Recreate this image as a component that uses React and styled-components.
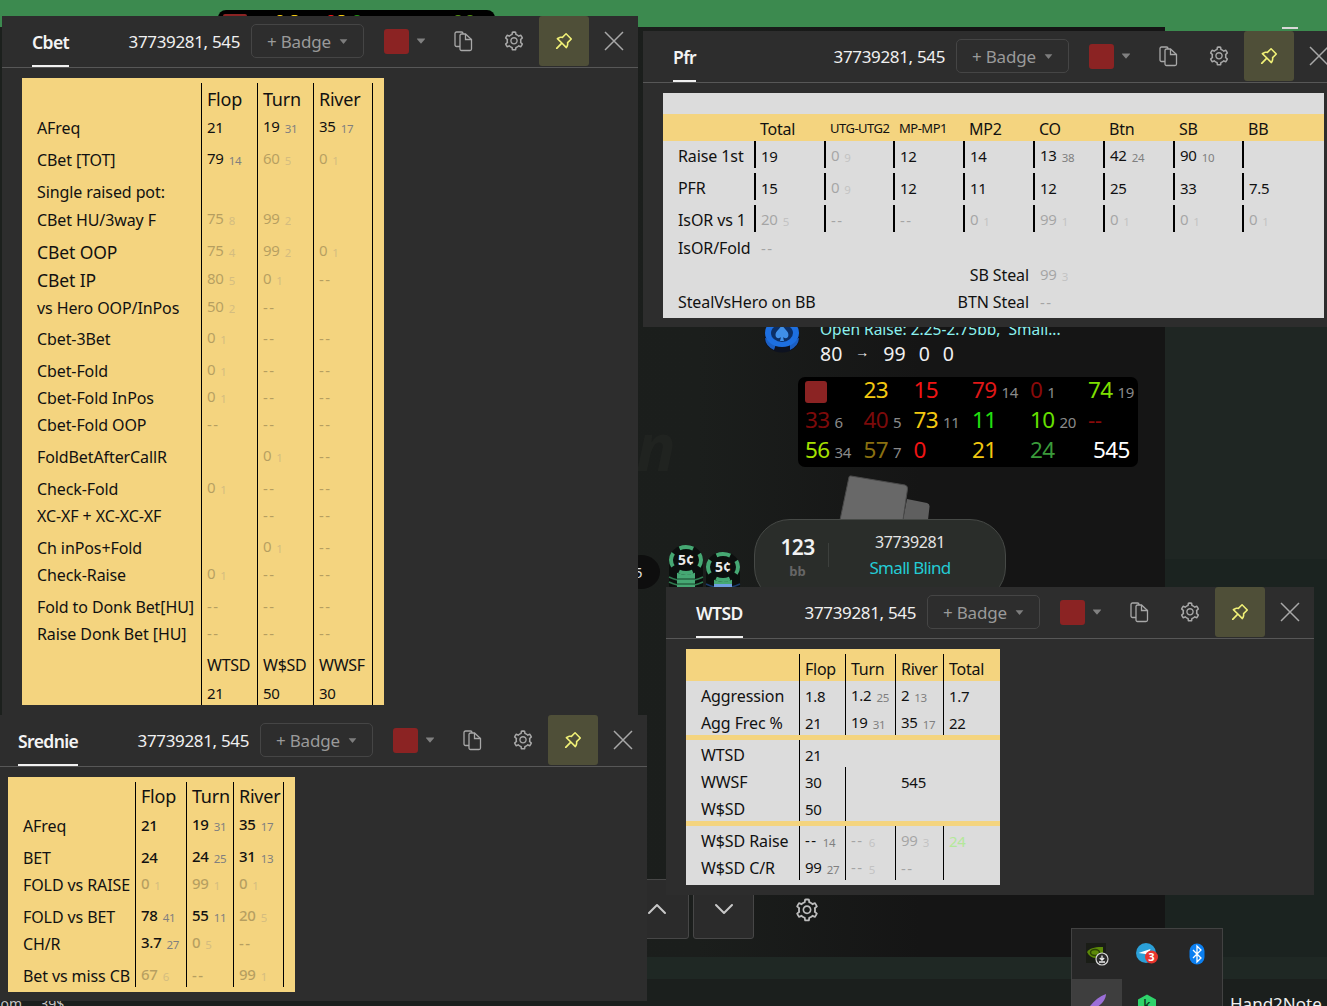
import React from "react";
import styled, { createGlobalStyle } from "styled-components";
import { AiOutlineSetting, AiOutlinePushpin, AiFillCaretDown } from "react-icons/ai";
import { ChevronUp, ChevronDown } from "lucide-react";

const Global = createGlobalStyle`
  html, body { margin: 0; padding: 0; width: 1327px; height: 1006px; overflow: hidden; background: #3c8a4f; }
  * { box-sizing: border-box; }
  body { font-family: "Noto Sans", "Open Sans", sans-serif; }
`;

const Desktop = styled.div`position: relative; width: 1327px; height: 1006px; overflow: hidden; background: #3c8a4f;`;
const AppArea = styled.div`position: absolute; left: 0; top: 27px; width: 1165px; height: 930px;
  background: linear-gradient(90deg, #1c201d 0, #1b1e1c 60%, #151515 79%, #151515 100%);`;
const SideArea = styled.div`position: absolute; left: 1165px; top: 31px; width: 162px; height: 926px;
  background: linear-gradient(180deg, #1f2623 0, #1f2623 57%, #1b2320 57%, #1b2320 100%);`;
const BottomBand = styled.div`position: absolute; left: 0; top: 957px; width: 1327px; height: 22px; background: #1f2824;`;
const BottomBar = styled.div`position: absolute; left: 0; top: 979px; width: 1327px; height: 27px; background: #1b1f1d;`;
const MinimizeMark = styled.div`position: absolute; left: 1282px; top: 27px; width: 16px; height: 2px; background: #d8d8d8;`;
const Watermark = styled.div`position: absolute; left: 636px; top: 400px; font: italic 700 66px "Noto Sans", sans-serif; color: #202320;`;

const PeekPanel = styled.div`position: absolute; left: 218px; top: 10px; width: 277px; height: 20px; background: #000; border-radius: 8px; overflow: hidden;`;
const PeekMark = styled.i`position: absolute; left: ${p => p.$x}px; top: ${p => p.$t}px; width: ${p => p.$w}px; height: 8px; background: ${p => p.$c}; border-radius: 2px;`;

const OpenRaise = styled.div`position: absolute; left: 820px; top: 318px; font-size: 15.500px; line-height: 22px; color: #8cf1ee; white-space: pre;`;
const Flow = styled.div`position: absolute; left: 820px; top: 340px; display: flex; align-items: center; gap: 13px; font-size: 19.500px; line-height: 28px; color: #f0f0f0;`;
const FlowArrow = styled.span`font-size: 14px; margin: 0 1px 0 0; position: relative; top: -2px;`;
const ChipLogo = styled.svg`position: absolute; left: 764px; top: 318px;`;

const StatsPanel = styled.div`position: absolute; left: 798px; top: 377px; width: 340px; height: 90px; background: #000; border-radius: 7px;
  display: grid; grid-template-columns: 58.500px 50px 58.500px 58px 58px 1fr; grid-auto-rows: 30px; padding-left: 7px;`;
const StatCell = styled.div`display: flex; align-items: baseline; color: ${p => p.$c}; font-size: 22.500px; line-height: 26px; letter-spacing: -0.6px; white-space: nowrap; padding-left: ${p => (p.$pad ? 5 : 0)}px;`;
const StatSub = styled.span`font-size: 15px; color: #8a8a8a; margin-left: 5px; letter-spacing: -0.3px;`;
const Swatch = styled.div`width: 22px; height: 22px; margin-top: 4px; background: #8b2323; border-radius: 3px;`;

const CardsArt = styled.svg`position: absolute; left: 835px; top: 470px;`;
const ChipsArt = styled.svg`position: absolute; left: 664px; top: 540px;`;
const DealerDisc = styled.div`position: absolute; left: 622px; top: 555px; width: 38px; height: 34px; border-radius: 50%; background: #0e0e0e; color: #ddd; font-size: 15px; line-height: 34px; text-align: left; padding-left: 12px;`;

const PlayerPill = styled.div`position: absolute; left: 754px; top: 519px; width: 252px; height: 84px; border-radius: 36px; background: #2a2d2a; border: 1px solid #464946;
  display: grid; grid-template-columns: 73px 1fr; align-items: start;`;
const StackBox = styled.div`display: flex; flex-direction: column; align-items: center; padding: 11px 0 0 12px; height: 58px;`;
const StackValue = styled.div`font-size: 21px; font-weight: 600; line-height: 32px; color: #f2f2f2; letter-spacing: -0.6px;`;
const StackUnit = styled.div`font-size: 13px; font-weight: 700; line-height: 16px; color: #666;`;
const PlayerInfo = styled.div`display: flex; flex-direction: column; align-items: center; padding-right: 14px; border-left: 1px solid #3d403d; height: 24px; margin-top: 23px; position: relative;`;
const PlayerId = styled.div`margin-top: -12px; font-size: 16px; line-height: 22px; color: #e4e4e4; letter-spacing: -0.4px;`;
const PlayerRole = styled.div`margin-top: 3px; font-size: 17px; line-height: 24px; color: #24cbd4; letter-spacing: -0.7px; white-space: nowrap;`;

const NavButton = styled.div`position: absolute; left: ${p => p.$x}px; top: 879px; width: ${p => p.$w}px; height: 60px; background: #2b2b2b; border: 1px solid #474747; border-radius: 0 0 3px 3px;
  display: flex; align-items: center; justify-content: center; color: #c8c8c8;`;
const TableGear = styled.div`position: absolute; left: 794px; top: 897px; color: #bcbcbc; display: flex;`;

const Tray = styled.div`position: absolute; left: 1071px; top: 928px; width: 152px; height: 78px; background: #272727; border: 1px solid #424242; border-bottom: 0;
  display: grid; grid-template-columns: repeat(3, 50px); grid-auto-rows: 50px; justify-items: center;`;
const TraySlot = styled.div`width: 50px; height: 50px; display: flex; justify-content: center; align-items: ${p => (p.$low ? "flex-start" : "center")}; padding-top: ${p => (p.$low ? 15 : 0)}px; background: ${p => (p.$active ? "#3e3e3e" : "transparent")};`;
const TrayLabel = styled.div`position: absolute; left: 1230px; top: 992px; font-size: 17px; line-height: 24px; color: #f0f0f0; white-space: nowrap;`;
const FooterText = styled.div`position: absolute; left: -10px; top: 994px; font-size: 14px; line-height: 20px; color: #c4c4c4; white-space: pre;`;

const Win = styled.section`position: absolute; left: ${p => p.$x}px; top: ${p => p.$y}px; width: ${p => p.$w}px; height: ${p => p.$h}px; background: #2d2d2d; overflow: hidden;`;
const Header = styled.header`display: flex; height: 52px; border-bottom: 1px solid #575757; padding-left: 30px;`;
const Tab = styled.div`height: 51px; line-height: 52px; color: #f4f4f4; font-size: 17.500px; font-weight: 600; border-bottom: 2px solid #f0f0f0; letter-spacing: -0.6px;`;
const Tools = styled.div`margin-left: auto; display: flex; align-items: center; height: 50px;`;
const PlayerTag = styled.div`font-size: 17px; color: #f0f0f0; letter-spacing: -0.35px; margin-right: 11px; white-space: nowrap;`;
const BadgeButton = styled.div`width: 113px; height: 34px; border: 1px solid #454545; border-radius: 5px; display: flex; align-items: center; padding-left: 15px; gap: 7px; color: #9a9a9a; font-size: 17px; letter-spacing: -0.2px;`;
const ColorBox = styled.div`width: 25px; height: 25px; background: #8b2323; border-radius: 3px; margin-left: 20px;`;
const ColorCaret = styled.div`display: flex; color: #808080; margin-left: 6px; margin-right: 10px;`;
const ToolButton = styled.div`width: ${p => p.$w || 50}px; height: 50px; display: flex; align-items: center; justify-content: center; color: #a8a8a8;`;
const PinButton = styled(ToolButton)`background: #4f4f38; border-radius: 3px; color: #f1f177;`;

const Body = styled.div`padding: 10px 20px;`;
const Sheet = styled.div`width: ${p => p.$w}px; height: ${p => p.$h}px; background: ${p => p.$bg}; padding-top: ${p => p.$pt || 0}px; overflow: hidden; color: #111;`;
const Row = styled.div`display: grid; grid-template-columns: ${p => p.$cols}; height: ${p => p.$h}px; margin-top: ${p => p.$mt || 0}px; background: ${p => (p.$band ? "#f4d47f" : "transparent")};`;
const Label = styled.div`padding-left: 15px; align-self: end; line-height: 23px; font-size: ${p => p.$size || 16}px; white-space: nowrap; letter-spacing: -0.1px;`;
const YellowLabel = styled(Label)`line-height: 21px;`;
const Cell = styled.div`border-left: ${p => (p.$plain ? "0" : `${p.$line || 1}px solid #000`)}; border-right: ${p => (p.$end ? "1px solid #000" : "0")}; padding-left: ${p => (p.$plain ? (p.$line === 2 ? 7 : 6) : 5)}px;
  margin-top: ${p => p.$top || 0}px; display: flex; align-items: flex-end; line-height: 23px; font-size: ${p => p.$size || 15}px; white-space: nowrap; letter-spacing: -0.25px; font-weight: ${p => (p.$bold ? 500 : 400)};`;
const Val = styled.span`opacity: ${p => (p.$faded ? 0.27 : 1)}; display: inline-flex; align-items: baseline; letter-spacing: ${p => (p.$dash ? "1.5px" : "inherit")};`;
const Sub = styled.span`font-size: 11.500px; color: #7f7f7f; margin-left: 5px; font-weight: 400; letter-spacing: -0.3px; position: relative; top: 1px;`;
const Tint = styled.span`color: #b4e89a;`;
const SpanLabel = styled.div`grid-column: 1 / span 5; display: flex; justify-content: space-between; align-self: end; padding: 0 4px 0 15px; line-height: 23px; font-size: 16px; letter-spacing: -0.1px; white-space: nowrap;`;
const TinyHead = styled.span`font-size: 13px; letter-spacing: -0.5px; position: relative; top: -1px;`;

function V({ v, s, f }) {
  return <Val $faded={f} $dash={v === "--"}>{v}{s && <Sub>{s}</Sub>}</Val>;
}

function Copy() {
  return (
    <svg width="19" height="21" viewBox="0 0 19 21" fill="none" stroke="currentColor" strokeWidth="1.3">
      <path d="M6 15.5H2.5A1.5 1.5 0 0 1 1 14V2.5A1.5 1.5 0 0 1 2.5 1H7.5A1.5 1.5 0 0 1 9 2.5V3" />
      <path d="M6 4.5A1.5 1.5 0 0 1 7.5 3H11.5L17.5 8.5V18A1.5 1.5 0 0 1 16 19.5H7.5A1.5 1.5 0 0 1 6 18Z" />
      <path d="M11.5 3V8.5H17.5" />
    </svg>
  );
}
function Close() {
  return (
    <svg width="20" height="20" viewBox="0 0 20 20" stroke="currentColor" strokeWidth="1.5">
      <path d="M1 1L19 19M19 1L1 19" />
    </svg>
  );
}

function WindowHeader({ title }) {
  return (
    <Header>
      <Tab>{title}</Tab>
      <Tools>
        <PlayerTag>37739281, 545</PlayerTag>
        <BadgeButton>+ Badge <AiFillCaretDown size={11} color="#7d7d7d" /></BadgeButton>
        <ColorBox />
        <ColorCaret><AiFillCaretDown size={12} /></ColorCaret>
        <ToolButton $w={52}><Copy /></ToolButton>
        <ToolButton><AiOutlineSetting size={22} /></ToolButton>
        <PinButton><AiOutlinePushpin size={22} /></PinButton>
        <ToolButton $w={49}><Close /></ToolButton>
      </Tools>
    </Header>
  );
}

const CBET_COLS = "179px 56px 56px 60px";
const d = { v: "--", f: true };
const n = null;
const cbetRows = [
  [28, "AFreq", {v:"21"}, {v:"19",s:"31"}, {v:"35",s:"17"}],
  [32, "CBet [TOT]", {v:"79",s:"14"}, {v:"60",s:"5",f:1}, {v:"0",s:"1",f:1}],
  [32, "Single raised pot:", n, n, n],
  [28, "CBet HU/3way F", {v:"75",s:"8",f:1}, {v:"99",s:"2",f:1}, n],
  [32, "CBet OOP", {v:"75",s:"4",f:1}, {v:"99",s:"2",f:1}, {v:"0",s:"1",f:1}, 17.5],
  [28, "CBet IP", {v:"80",s:"5",f:1}, {v:"0",s:"1",f:1}, d, 17.5],
  [28, "vs Hero OOP/InPos", {v:"50",s:"2",f:1}, d, n],
  [31, "Cbet-3Bet", {v:"0",s:"1",f:1}, d, d],
  [32, "Cbet-Fold", {v:"0",s:"1",f:1}, d, d],
  [27, "Cbet-Fold InPos", {v:"0",s:"1",f:1}, d, d],
  [27, "Cbet-Fold OOP", d, d, d],
  [32, "FoldBetAfterCallR", n, {v:"0",s:"1",f:1}, d],
  [32, "Check-Fold", {v:"0",s:"1",f:1}, d, d],
  [27, "XC-XF + XC-XC-XF", n, d, d],
  [32, "Ch inPos+Fold", n, {v:"0",s:"1",f:1}, d],
  [27, "Check-Raise", {v:"0",s:"1",f:1}, d, d],
  [32, "Fold to Donk Bet[HU]", d, d, d],
  [27, "Raise Donk Bet [HU]", d, d, d],
  [32, "", {v:"WTSD"}, {v:"W$SD"}, {v:"WWSF"}],
  [28, "", {v:"21"}, {v:"50"}, {v:"30"}],
];

const SRED_COLS = "127px 51px 47px 51px";
const sredRows = [
  [29, "AFreq", {v:"21"}, {v:"19",s:"31"}, {v:"35",s:"17"}],
  [32, "BET", {v:"24"}, {v:"24",s:"25"}, {v:"31",s:"13"}],
  [27, "FOLD vs RAISE", {v:"0",s:"1",f:1}, {v:"99",s:"1",f:1}, {v:"0",s:"1",f:1}],
  [32, "FOLD vs BET", {v:"78",s:"41"}, {v:"55",s:"11"}, {v:"20",s:"5",f:1}],
  [27, "CH/R", {v:"3.7",s:"27"}, {v:"0",s:"5",f:1}, d],
  [32, "Bet vs miss CB", {v:"67",s:"6",f:1}, d, {v:"99",s:"1",f:1}],
];

const PFR_COLS = "91px 70px 69px 70px 70px 70px 70px 69px 82px";
const pfrRows = [
  [0, "Raise 1st", {v:"19"}, {v:"0",s:"9",f:1}, {v:"12"}, {v:"14"}, {v:"13",s:"38"}, {v:"42",s:"24"}, {v:"90",s:"10"}, n],
  [5, "PFR", {v:"15"}, {v:"0",s:"9",f:1}, {v:"12"}, {v:"11"}, {v:"12"}, {v:"25"}, {v:"33"}, {v:"7.5"}],
  [5, "IsOR vs 1", {v:"20",s:"5",f:1}, d, d, {v:"0",s:"1",f:1}, {v:"99",s:"1",f:1}, {v:"0",s:"1",f:1}, {v:"0",s:"1",f:1}, {v:"0",s:"1",f:1}],
];

const WT_COLS = "113px 46px 50px 48px 57px";

const Val2 = ({ c }) => (c ? <V v={c.v} s={c.s} f={c.f} /> : null);

const stats = [
  [{ swatch: true }, { v: "23", c: "#f2c811" }, { v: "15", c: "#f01414" }, { v: "79", s: "14", c: "#e01818" }, { v: "0", s: "1", c: "#8a0a0a" }, { v: "74", s: "19", c: "#7fe000" }],
  [{ v: "33", s: "6", c: "#7c0a0a" }, { v: "40", s: "5", c: "#7c0a0a" }, { v: "73", s: "11", c: "#f2c811" }, { v: "11", c: "#22e010" }, { v: "10", s: "20", c: "#66e000" }, { v: "--", c: "#8a0a0a" }],
  [{ v: "56", s: "34", c: "#a6e000" }, { v: "57", s: "7", c: "#8a7010" }, { v: "0", c: "#f01414" }, { v: "21", c: "#f2c811" }, { v: "24", c: "#3a9a3a" }, { v: "545", c: "#ffffff", pad: true }],
];

function Chip({ cx, cy, body, stripe, lowColor }) {
  return (
    <g>
      <rect x={cx - 17} y={cy} width="34" height="30" rx="5" fill="#0b0f0d" />
      <path d={`M${cx - 17} ${cy + 17}q17 8 34 0M${cx - 17} ${cy + 22}q17 8 34 0`} stroke={stripe} strokeWidth="1.5" fill="none" />
      <rect x={cx - 9} y={cy + 12} width="18" height="18" fill={body} />
      {lowColor && <rect x={cx - 9} y={cy + 17} width="18" height="13" fill={lowColor} />}
      <path d={`M${cx - 9} ${cy + 19}h18M${cx - 9} ${cy + 24}h18`} stroke="#16402a" strokeWidth="1" opacity={lowColor ? 0 : 1} />
      <ellipse cx={cx} cy={cy} rx="17" ry="15" fill="#0c0f0e" />
      <ellipse cx={cx} cy={cy} rx="15" ry="13" fill="none" stroke="#46a873" strokeWidth="4" strokeDasharray="14 8" strokeDashoffset="7" />
      <text x={cx} y={cy + 5} textAnchor="middle" fontSize="14" fontWeight="700" fill="#ececec" fontFamily="Noto Sans">5¢</text>
    </g>
  );
}

export default function App() {
  return (
    <Desktop>
      <Global />
      <AppArea />
      <SideArea />
      <BottomBand />
      <BottomBar />
      <MinimizeMark />
      <Watermark>n</Watermark>

      <PeekPanel>
        <PeekMark $x={5} $t={4} $w={24} $c="#8b2323" />
        <PeekMark $x={59} $t={5} $w={6} $c="#f2c811" />
        <PeekMark $x={73} $t={5} $w={7} $c="#f2c811" />
        <PeekMark $x={110} $t={5} $w={6} $c="#f01414" />
        <PeekMark $x={120} $t={5} $w={7} $c="#f2c811" />
        <PeekMark $x={136} $t={5} $w={6} $c="#1f8a10" />
        <PeekMark $x={237} $t={5} $w={6} $c="#4f8a10" />
        <PeekMark $x={249} $t={5} $w={6} $c="#4f8a10" />
      </PeekPanel>

      <ChipLogo width="36" height="36" viewBox="0 0 36 36">
        <ellipse cx="18" cy="20" rx="17.500" ry="14.500" fill="#0d1220" />
        <path d="M1 20a17.500 14.500 0 0 0 9 12l3-9zM26 32a17.500 14.500 0 0 0 9-12l-9 3z" fill="#1b5fc4" />
        <ellipse cx="18" cy="15" rx="17" ry="14" fill="#1d6fe0" />
        <ellipse cx="18" cy="15" rx="11" ry="9" fill="#0c2f66" />
        <path d="M18 7C15 12 10 14 12 19C14 21 16 20 17 19L16 23H20L19 19C20 20 22 21 24 19C26 14 21 12 18 7Z" fill="#3f8fe8" />
      </ChipLogo>
      <OpenRaise>Open Raise: 2.25-2.75bb,  Small...</OpenRaise>
      <Flow>
        <span>80</span><FlowArrow>→</FlowArrow><span>99</span><span>0</span><span>0</span>
      </Flow>

      <StatsPanel>
        {stats.flat().map((s, i) =>
          s.swatch ? <Swatch key={i} /> : (
            <StatCell key={i} $c={s.c} $pad={s.pad}>
              {s.v}{s.s && <StatSub>{s.s}</StatSub>}
            </StatCell>
          )
        )}
      </StatsPanel>

      <CardsArt width="100" height="52" viewBox="0 0 100 52">
        <path d="M72 29L92 33Q95 34 94.500 37L93 50H68Z" fill="#5f5f5f" />
        <path d="M14 7Q14.500 5.500 16 6L70 15Q73 16 72.500 19L68 50H5Z" fill="#686868" stroke="#4a4a4a" strokeWidth="1" />
      </CardsArt>
      <DealerDisc>5</DealerDisc>
      <ChipsArt width="80" height="50" viewBox="0 0 80 50">
        <Chip cx={22} cy={20} body="#46a873" stripe="#2f7a4f" />
        <Chip cx={59} cy={27} body="#46a873" stripe="#1b3a6a" lowColor="#6f9fe0" />
      </ChipsArt>
      <PlayerPill>
        <StackBox>
          <StackValue>123</StackValue>
          <StackUnit>bb</StackUnit>
        </StackBox>
        <PlayerInfo>
          <PlayerId>37739281</PlayerId>
          <PlayerRole>Small Blind</PlayerRole>
        </PlayerInfo>
      </PlayerPill>

      <NavButton $x={620} $w={69}><ChevronUp size={32} strokeWidth={1.5} style={{ marginLeft: 5 }} /></NavButton>
      <NavButton $x={693} $w={61}><ChevronDown size={32} strokeWidth={1.5} /></NavButton>
      <TableGear><AiOutlineSetting size={26} /></TableGear>

      <Tray>
        <TraySlot>
          <svg width="24" height="24" viewBox="0 0 24 24">
            <rect x="1" y="1" width="20" height="20" fill="#1a1d16" />
            <path d="M2 10C6 5 12 5 18 5V16H11C7 16 4 14 2 10Z" fill="#5c8a08" />
            <ellipse cx="10" cy="10.500" rx="4.500" ry="3" fill="none" stroke="#2c4404" strokeWidth="1.500" />
            <circle cx="17" cy="17" r="6" fill="#2b2b2b" stroke="#d8d8d8" strokeWidth="1.200" />
            <path d="M17 13.500v4M14.800 16l2.200 2 2.200-2M14 20h6" fill="none" stroke="#eee" strokeWidth="1.300" />
          </svg>
        </TraySlot>
        <TraySlot>
          <svg width="22" height="22" viewBox="0 0 22 22">
            <circle cx="10" cy="10" r="10" fill="#2ba0d8" />
            <path d="M2.500 10l12-4-3 8-2-3z" fill="#fff" />
            <circle cx="15.500" cy="14" r="6.500" fill="#e8352e" />
            <text x="15.500" y="18" textAnchor="middle" fontSize="11" fontWeight="700" fill="#fff" fontFamily="Noto Sans">3</text>
          </svg>
        </TraySlot>
        <TraySlot>
          <svg width="16" height="22" viewBox="0 0 16 22">
            <rect x="0.500" y="0.500" width="15" height="21" rx="7.500" fill="#0b7ff0" />
            <path d="M4 7l8 8-4 4V3l4 4-8 8" fill="none" stroke="#fff" strokeWidth="1.300" />
          </svg>
        </TraySlot>
        <TraySlot $active $low>
          <svg width="22" height="18" viewBox="0 0 22 18">
            <path d="M1 17C5 9 12 3 20 0C20 6 14 13 6 15L3 17Z" fill="#9c6fd8" />
          </svg>
        </TraySlot>
        <TraySlot $low>
          <svg width="20" height="24" viewBox="0 0 20 24">
            <path d="M10 0.500l9 5v11l-9 5-9-5v-11z" fill="#2fd36b" />
            <text x="10" y="15" textAnchor="middle" fontSize="13" fontWeight="500" fill="#08301a" fontFamily="Noto Sans">k</text>
          </svg>
        </TraySlot>
      </Tray>
      <TrayLabel>Hand2Note</TrayLabel>
      <FooterText>.com     39$</FooterText>

      <Win $x={2} $y={16} $w={636} $h={720}>
        <WindowHeader title="Cbet" />
        <Body>
          <Sheet $w={362} $h={627} $bg="#f4d47f" $pt={5}>
            <Row $cols={CBET_COLS} $h={28}>
              <Label />
              <Cell $size={18}>Flop</Cell><Cell $size={18}>Turn</Cell><Cell $size={18} $end>River</Cell>
            </Row>
            {cbetRows.map((r, i) => (
              <Row key={i} $cols={CBET_COLS} $h={r[0]}>
                <YellowLabel $size={r[5]}>{r[1]}</YellowLabel>
                <Cell $size={r[2] && r[2].v === "WTSD" ? 16 : 15}><Val2 c={r[2]} /></Cell>
                <Cell $size={r[3] && r[3].v === "W$SD" ? 16 : 15}><Val2 c={r[3]} /></Cell>
                <Cell $size={r[4] && r[4].v === "WWSF" ? 16 : 15} $end><Val2 c={r[4]} /></Cell>
              </Row>
            ))}
          </Sheet>
        </Body>
      </Win>

      <Win $x={643} $y={31} $w={700} $h={296}>
        <WindowHeader title="Pfr" />
        <Body>
          <Sheet $w={661} $h={225} $bg="#dcdcdc" $pt={21}>
            <Row $cols={PFR_COLS} $h={27} $band>
              <Label />
              <Cell $plain $size={16}>Total</Cell>
              <Cell $plain><TinyHead>UTG-UTG2</TinyHead></Cell>
              <Cell $plain><TinyHead>MP-MP1</TinyHead></Cell>
              <Cell $plain $size={16}>MP2</Cell><Cell $plain $size={16}>CO</Cell><Cell $plain $size={16}>Btn</Cell><Cell $plain $size={16}>SB</Cell><Cell $plain $size={16}>BB</Cell>
            </Row>
            {pfrRows.map((r, i) => (
              <Row key={i} $cols={PFR_COLS} $h={27} $mt={r[0]}>
                <Label>{r[1]}</Label>
                {r.slice(2).map((c, j) => (
                  <Cell key={j} $line={2}><Val2 c={c} /></Cell>
                ))}
              </Row>
            ))}
            <Row $cols={PFR_COLS} $h={27} $mt={1}>
              <Label>IsOR/Fold</Label>
              <Cell $plain $line={2}><V v="--" f /></Cell>
            </Row>
            <Row $cols={PFR_COLS} $h={27}>
              <SpanLabel><span /><span>SB Steal</span></SpanLabel>
              <Cell $plain $line={2}><V v="99" s="3" f /></Cell>
            </Row>
            <Row $cols={PFR_COLS} $h={27}>
              <SpanLabel><span>StealVsHero on BB</span><span>BTN Steal</span></SpanLabel>
              <Cell $plain $line={2}><V v="--" f /></Cell>
            </Row>
          </Sheet>
        </Body>
      </Win>

      <Win $x={666} $y={587} $w={648} $h={308}>
        <WindowHeader title="WTSD" />
        <Body>
          <Sheet $w={314} $h={236} $bg="#dcdcdc">
            <Row $cols={WT_COLS} $h={32} $band>
              <Label />
              <Cell $size={16} $top={5}>Flop</Cell>
              <Cell $size={16} $top={5}>Turn</Cell>
              <Cell $size={16} $top={5}>River</Cell>
              <Cell $size={16} $top={5}>Total</Cell>
            </Row>
            <Row $cols={WT_COLS} $h={27}>
              <Label>Aggression</Label>
              <Cell><V v="1.8" /></Cell><Cell><V v="1.2" s="25" /></Cell><Cell><V v="2" s="13" /></Cell><Cell><V v="1.7" /></Cell>
            </Row>
            <Row $cols={WT_COLS} $h={27}>
              <Label>Agg Frec %</Label>
              <Cell><V v="21" /></Cell><Cell><V v="19" s="31" /></Cell><Cell><V v="35" s="17" /></Cell><Cell><V v="22" /></Cell>
            </Row>
            <Row $cols={WT_COLS} $h={5} $band />
            <Row $cols={WT_COLS} $h={27}>
              <Label>WTSD</Label>
              <Cell><V v="21" /></Cell>
            </Row>
            <Row $cols={WT_COLS} $h={27}>
              <Label>WWSF</Label>
              <Cell><V v="30" /></Cell>
              <Cell />
              <Cell $plain>545</Cell>
            </Row>
            <Row $cols={WT_COLS} $h={27}>
              <Label>W$SD</Label>
              <Cell><V v="50" /></Cell>
              <Cell />
            </Row>
            <Row $cols={WT_COLS} $h={5} $band />
            <Row $cols={WT_COLS} $h={27}>
              <Label>W$SD Raise</Label>
              <Cell><V v="--" s="14" /></Cell>
              <Cell><V v="--" s="6" f /></Cell>
              <Cell><V v="99" s="3" f /></Cell>
              <Cell><Tint>24</Tint></Cell>
            </Row>
            <Row $cols={WT_COLS} $h={27}>
              <Label>W$SD C/R</Label>
              <Cell><V v="99" s="27" /></Cell>
              <Cell><V v="--" s="5" f /></Cell>
              <Cell><V v="--" f /></Cell>
              <Cell />
            </Row>
          </Sheet>
        </Body>
      </Win>

      <Win $x={-12} $y={715} $w={659} $h={286}>
        <WindowHeader title="Srednie" />
        <Body>
          <Sheet $w={287} $h={215} $bg="#f4d47f" $pt={5}>
            <Row $cols={SRED_COLS} $h={26}>
              <Label />
              <Cell $size={18}>Flop</Cell><Cell $size={18}>Turn</Cell><Cell $size={18} $end>River</Cell>
            </Row>
            {sredRows.map((r, i) => (
              <Row key={i} $cols={SRED_COLS} $h={r[0]}>
                <YellowLabel>{r[1]}</YellowLabel>
                <Cell $bold><Val2 c={r[2]} /></Cell>
                <Cell $bold><Val2 c={r[3]} /></Cell>
                <Cell $bold $end><Val2 c={r[4]} /></Cell>
              </Row>
            ))}
          </Sheet>
        </Body>
      </Win>
    </Desktop>
  );
}
